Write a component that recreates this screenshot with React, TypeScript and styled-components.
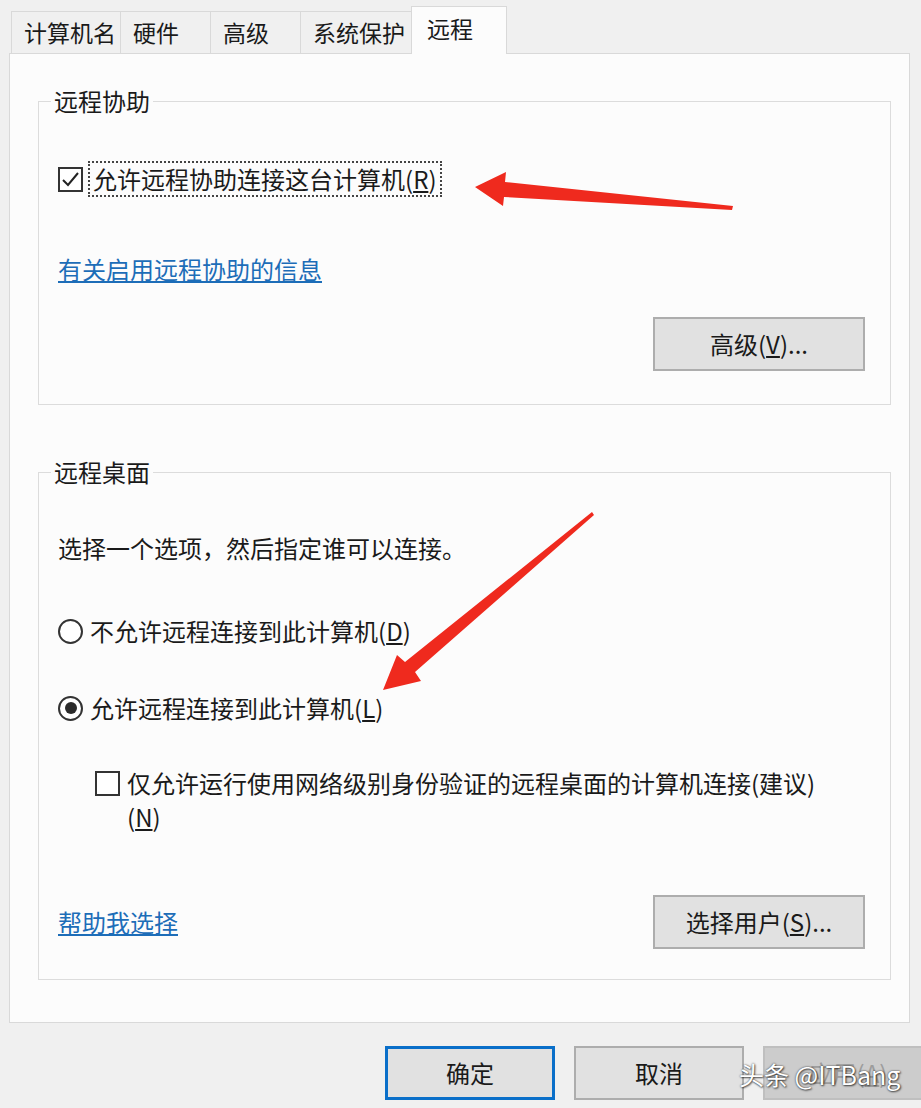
import React from 'react'
import styled, { createGlobalStyle } from 'styled-components'

const GlobalStyle = createGlobalStyle`
  html, body {
    margin: 0;
    padding: 0;
    background: #f0f0f0;
  }
  body {
    font-family: "Noto Sans CJK SC", "Microsoft YaHei", sans-serif;
    color: #1a1a1a;
  }
`

const Dialog = styled.div`
  position: relative;
  width: 921px;
  height: 1108px;
  overflow: hidden;
  background: #f0f0f0;
  font-size: 24px;
`

const TabStrip = styled.div`
  display: flex;
  align-items: flex-end;
  height: 53px;
  padding-left: 12px;
  box-sizing: border-box;
`

const Tab = styled.div<{ $active?: boolean; $w: number }>`
  position: relative;
  z-index: ${(p) => (p.$active ? 1 : 0)};
  box-sizing: border-box;
  width: ${(p) => p.$w}px;
  height: ${(p) => (p.$active ? 48 : 42)}px;
  margin-left: -1px;
  margin-bottom: ${(p) => (p.$active ? '-1px' : '0')};
  padding-left: ${(p) => (p.$active ? 15 : 12)}px;
  padding-bottom: ${(p) => (p.$active ? 4 : 0)}px;
  display: flex;
  align-items: center;
  font-size: 23px;
  line-height: 1;
  border: 1px solid #d9d9d9;
  border-bottom: none;
  background: ${(p) => (p.$active ? '#fcfcfc' : '#f0f0f0')};
`

const Panel = styled.div`
  box-sizing: border-box;
  margin-left: 9px;
  width: 901px;
  height: 970px;
  border: 1px solid #d9d9d9;
  background: #fcfcfc;
  padding: 30px 18px 0 28px;
`

const Group = styled.fieldset<{ $mt?: number }>`
  margin: ${(p) => p.$mt || 0}px 0 0;
  border: 1px solid #dcdcdc;
  padding: 0 25px ${(p) => (p.$mt ? 30 : 33)}px 19px;
  min-width: 0;
`

const Legend = styled.legend`
  padding: 0 3px;
  margin-left: -7px;
  font-size: 24px;
  line-height: 34px;
`

const Row = styled.div<{ $mt: number; $indent?: number }>`
  display: flex;
  align-items: center;
  margin-top: ${(p) => p.$mt}px;
  margin-left: ${(p) => p.$indent || 0}px;
  line-height: 34px;
`

const TopRow = styled(Row)`
  align-items: flex-start;
`

const Box = styled.span<{ $top?: number }>`
  box-sizing: border-box;
  flex: none;
  width: 25px;
  height: 25px;
  margin-top: ${(p) => p.$top || 0}px;
  border: 2px solid #333;
  background: #fff;
  display: flex;
  align-items: center;
  justify-content: center;
`

const Radio = styled.span<{ $on?: boolean }>`
  box-sizing: border-box;
  flex: none;
  width: 25px;
  height: 25px;
  border: 2px solid #333;
  border-radius: 50%;
  background: #fff;
  display: flex;
  align-items: center;
  justify-content: center;
  &::after {
    content: '';
    width: 12px;
    height: 12px;
    border-radius: 50%;
    background: ${(p) => (p.$on ? '#2b2b2b' : 'transparent')};
  }
`

const FocusLabel = styled.span`
  margin-left: 5px;
  padding: 0 3px;
  border: 2px dotted #444;
  line-height: 32px;
`

const Label = styled.span<{ $max?: number }>`
  margin-left: 7px;
  max-width: ${(p) => (p.$max ? `${p.$max}px` : 'none')};
`

const Text = styled.div<{ $mt: number }>`
  margin-top: ${(p) => p.$mt}px;
  line-height: 34px;
`

const LinkText = styled.a<{ $mt?: number }>`
  display: block;
  margin-top: ${(p) => p.$mt || 0}px;
  color: #1d6db8;
  text-decoration: underline;
  line-height: 34px;
  cursor: pointer;
`

const ButtonRow = styled.div<{ $mt: number; $split?: boolean }>`
  display: flex;
  align-items: center;
  justify-content: ${(p) => (p.$split ? 'space-between' : 'flex-end')};
  margin-top: ${(p) => p.$mt}px;
`

const Button = styled.button<{ $w?: number; $default?: boolean; $disabled?: boolean }>`
  box-sizing: border-box;
  width: ${(p) => p.$w || 212}px;
  height: 54px;
  padding: 0;
  font-family: inherit;
  font-size: 24px;
  line-height: 1;
  color: ${(p) => (p.$disabled ? '#9d9d9d' : '#1a1a1a')};
  background: ${(p) => (p.$disabled ? '#cccccc' : '#e1e1e1')};
  border: ${(p) =>
    p.$default ? '3px solid #0a6fc9' : p.$disabled ? '2px solid #bfbfbf' : '2px solid #adadad'};
  flex: none;
`

const Footer = styled.div`
  display: flex;
  justify-content: flex-end;
  gap: 19px;
  margin-top: 23px;
  margin-right: -12px;
`

const Watermark = styled.div`
  position: absolute;
  left: 739px;
  top: 1056px;
  font-size: 25px;
  line-height: 36px;
  color: #fff;
  white-space: nowrap;
  text-shadow: 0 0 2px rgba(0, 0, 0, 0.75), 1px 1px 2px rgba(0, 0, 0, 0.6);
`

const Overlay = styled.svg`
  position: absolute;
  left: 0;
  top: 0;
  pointer-events: none;
`

const Check = () => (
  <svg width="19" height="19" viewBox="0 0 19 19">
    <polyline points="2,10 7,15 17,3" fill="none" stroke="#222" strokeWidth="2" />
  </svg>
)

const tabs = [
  { label: '计算机名', w: 110 },
  { label: '硬件', w: 91 },
  { label: '高级', w: 91 },
  { label: '系统保护', w: 112 },
  { label: '远程', w: 96, active: true },
]

export default function App() {
  return (
    <Dialog>
      <GlobalStyle />
      <TabStrip>
        {tabs.map((t) => (
          <Tab key={t.label} $w={t.w} $active={t.active}>
            {t.label}
          </Tab>
        ))}
      </TabStrip>

      <Panel>
        <Group>
          <Legend>远程协助</Legend>
          <Row $mt={43}>
            <Box>
              <Check />
            </Box>
            <FocusLabel>
              允许远程协助连接这台计算机(<u>R</u>)
            </FocusLabel>
          </Row>
          <LinkText $mt={55}>有关启用远程协助的信息</LinkText>
          <ButtonRow $mt={31}>
            <Button>
              高级(<u>V</u>)...
            </Button>
          </ButtonRow>
        </Group>

        <Group $mt={50}>
          <Legend>远程桌面</Legend>
          <Text $mt={42}>选择一个选项，然后指定谁可以连接。</Text>
          <Row $mt={49}>
            <Radio />
            <Label>
              不允许远程连接到此计算机(<u>D</u>)
            </Label>
          </Row>
          <Row $mt={43}>
            <Radio $on />
            <Label>
              允许远程连接到此计算机(<u>L</u>)
            </Label>
          </Row>
          <TopRow $mt={41} $indent={37}>
            <Box $top={5} />
            <Label $max={700}>
              仅允许运行使用网络级别身份验证的远程桌面的计算机连接(建议)(<u>N</u>)
            </Label>
          </TopRow>
          <ButtonRow $mt={61} $split>
            <LinkText>帮助我选择</LinkText>
            <Button>
              选择用户(<u>S</u>)...
            </Button>
          </ButtonRow>
        </Group>
      </Panel>

      <Footer>
        <Button $w={170} $default>
          确定
        </Button>
        <Button $w={170}>取消</Button>
        <Button $w={170} $disabled>
          应用(<u>A</u>)
        </Button>
      </Footer>

      <Watermark>头条 @ITBang</Watermark>

      <Overlay width="921" height="1108" viewBox="0 0 921 1108">
        <polygon
          fill="#ef2a1e"
          points="475,187 506,172 505,182 733,206 732,210 504,197 503,206"
        />
        <polygon
          fill="#ef2a1e"
          points="383,690 397,655 405,662 592,512 594,515 415,672 421,681"
        />
      </Overlay>
    </Dialog>
  )
}
